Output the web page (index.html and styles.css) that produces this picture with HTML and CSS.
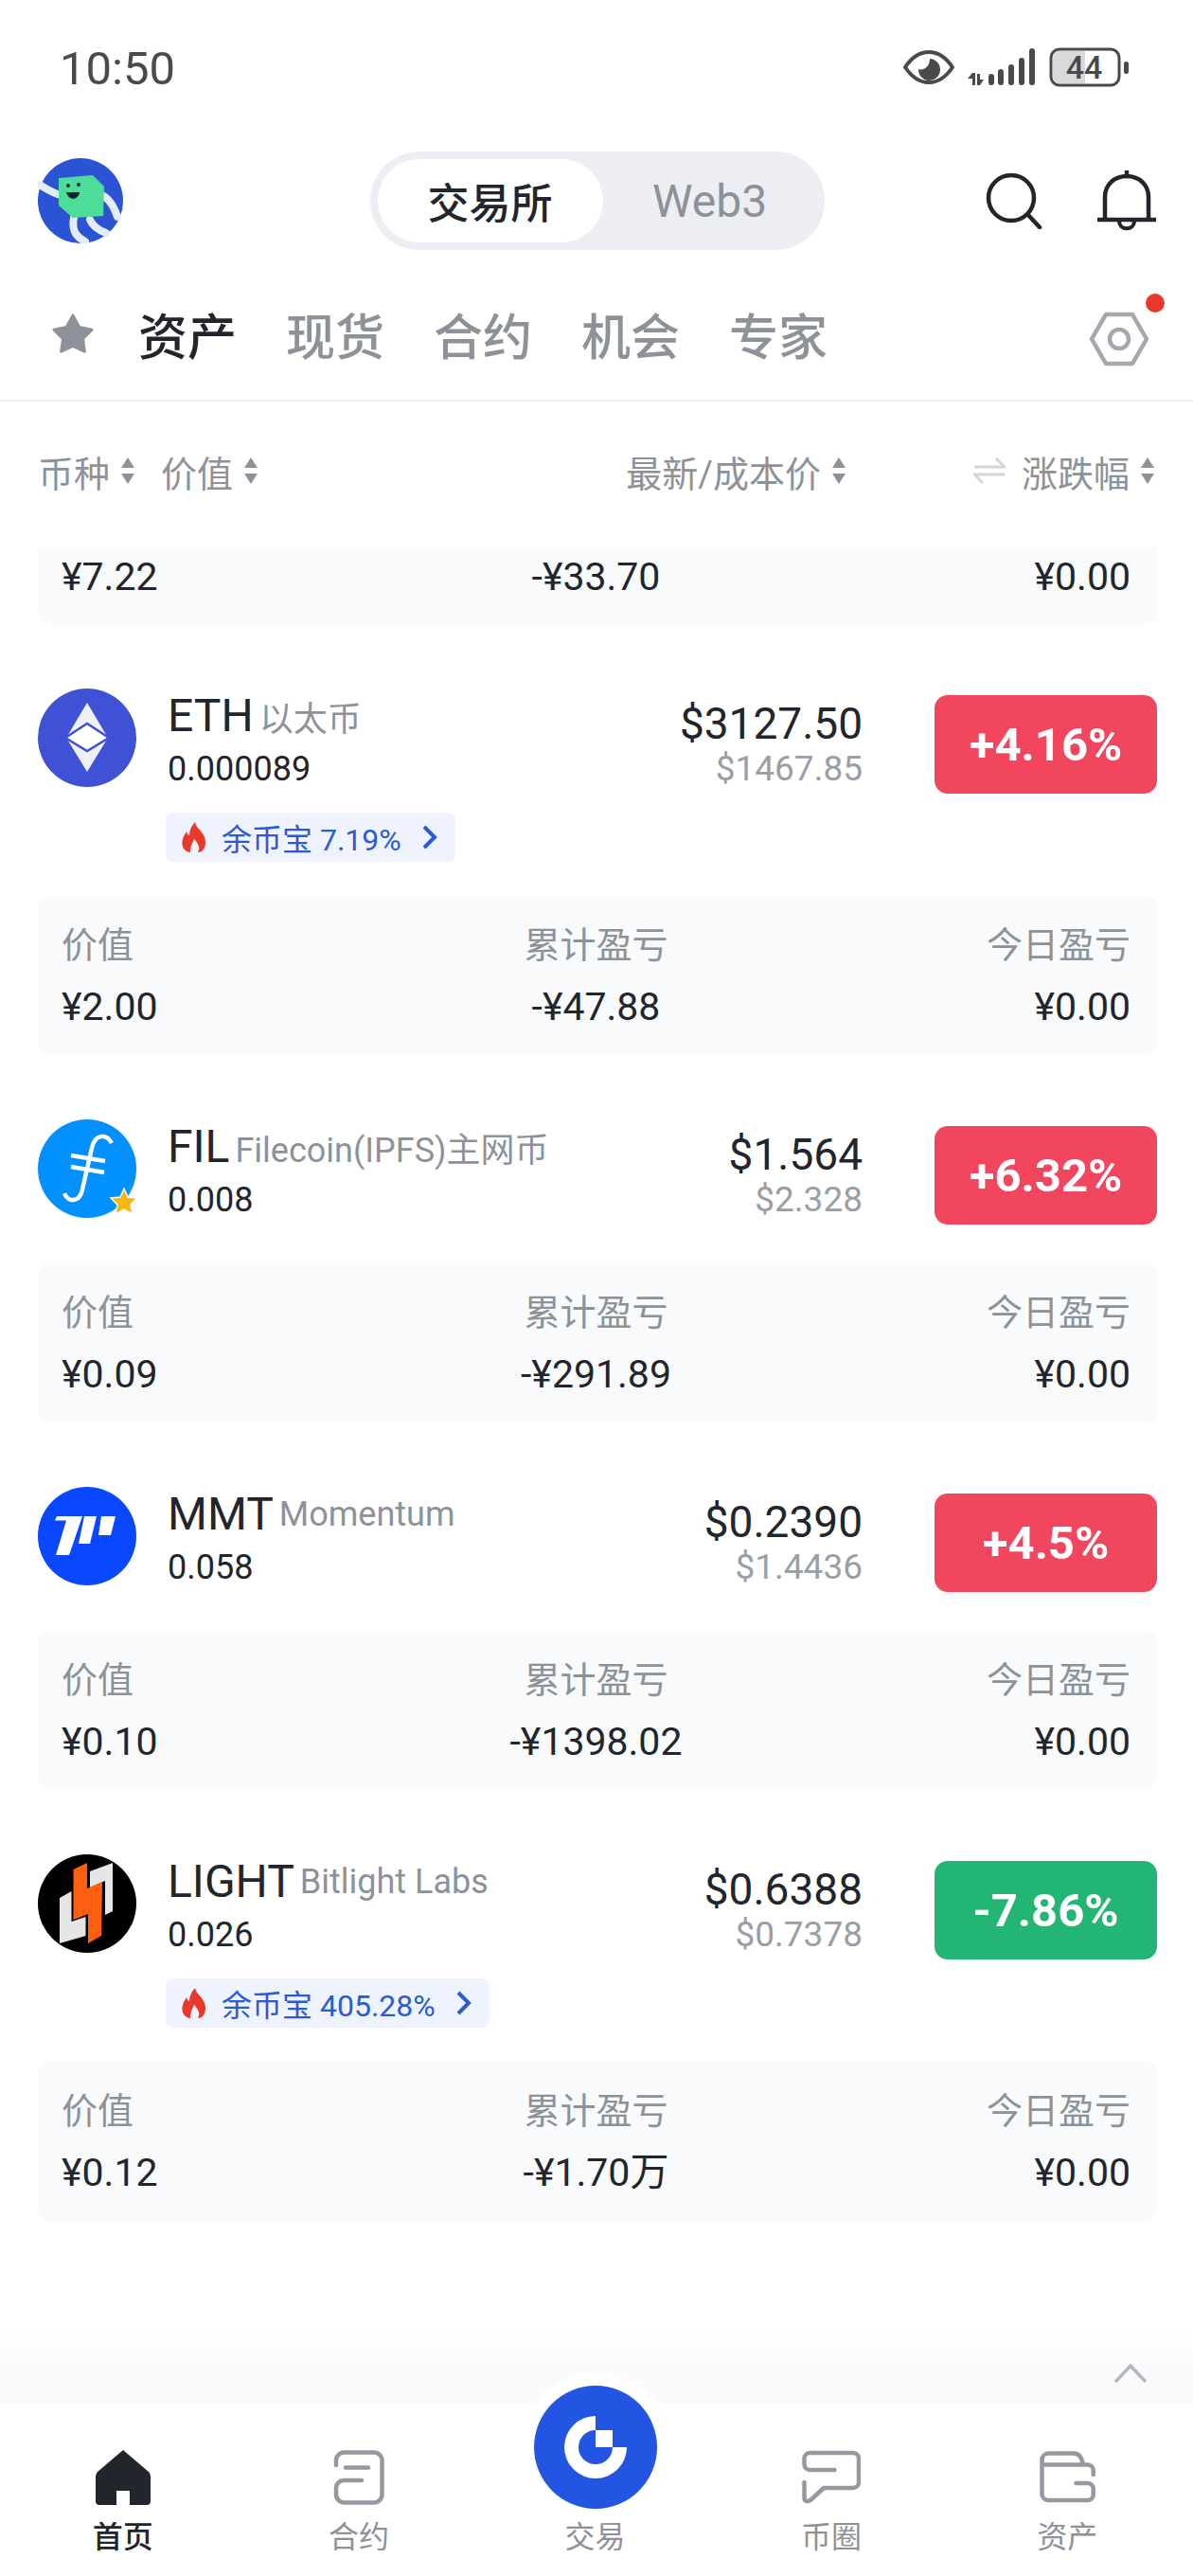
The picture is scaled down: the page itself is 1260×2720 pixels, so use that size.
FILE: index.html
```html
<!DOCTYPE html>
<html lang="zh-CN">
<head>
    <meta charset="UTF-8">
    <meta name="viewport" content="width=device-width, initial-scale=1.0">
    <title>资产</title>
    <link rel="stylesheet" href="styles.css">
</head>
<body>

<svg class="defs" width="0" height="0">
    <symbol id="sort" viewBox="0 0 16 30">
        <path d="M8 1 L15 12 H1 Z M8 29 L15 18 H1 Z" fill="#8d9299"/>
    </symbol>
    <symbol id="fire" viewBox="0 0 26 32">
        <path d="M14 0 C15 6 20 8 23 14 C27 21 25 32 17 32 C20 27 17 22 13 18 C11 23 9 25 9 32 C2 31 -1 25 1 18 C2 14 4 12 5 10 C6 13 7 14 8 14 C8 9 10 4 14 0 Z" fill="#e8392a"/>
    </symbol>
    <symbol id="chev" viewBox="0 0 16 26">
        <path d="M2 2 L13 13 L2 24" fill="none" stroke="#2b5bd0" stroke-width="4"/>
    </symbol>
</svg>

<div class="phone">

    <!-- status bar -->
    <div class="status">
        <span class="time">10:50</span>
        <div class="status-icons">
            <svg width="54" height="36" viewBox="0 0 54 36">
                <path d="M2 18 C10 6 18 2 27 2 C36 2 44 6 52 18 C44 30 36 34 27 34 C18 34 10 30 2 18 Z" fill="none" stroke="#4a4a4a" stroke-width="4"/>
                <path d="M27 7 A11.500 11.500 0 1 1 15 18 C20 20 27 16 27 7 Z" fill="#4a4a4a" transform="translate(1 2)"/>
            </svg>
            <svg width="72" height="42" viewBox="0 0 72 42">
                <path d="M5 27 V40 H8 V27 Z M5 27 L0 33 H5 Z M10 28 V40 H13 L17 34 H13 V28 Z" fill="#4a4a4a"/>
                <rect x="22" y="28" width="6" height="12" rx="3" fill="#4a4a4a"/>
                <rect x="32" y="23" width="6" height="17" rx="3" fill="#4a4a4a"/>
                <rect x="43" y="18" width="6" height="22" rx="3" fill="#4a4a4a"/>
                <rect x="54" y="11" width="6" height="29" rx="3" fill="#4a4a4a"/>
                <rect x="65" y="1" width="6" height="39" rx="3" fill="#4a4a4a"/>
            </svg>
            <svg class="battery" width="84" height="42" viewBox="0 0 84 42">
                <rect x="2" y="2" width="72" height="38" rx="9" fill="#fff" stroke="#4a4a4a" stroke-width="3"/>
                <path d="M4 11 A7 7 0 0 1 11 4 H38 V38 H11 A7 7 0 0 1 4 31 Z" fill="#d9d9d9"/>
                <text x="37" y="33" text-anchor="middle" class="batt-num">44</text>
                <rect x="79" y="15" width="5" height="13" rx="2.500" fill="#4a4a4a"/>
            </svg>
        </div>
    </div>

    <!-- top bar -->
    <div class="topbar">
        <svg class="avatar" width="90" height="90" viewBox="0 0 90 90">
            <circle cx="45" cy="45" r="45" fill="#2a54d4"/>
            <path d="M2 28 C8 32 14 36 24 39 M64 38 C74 40 80 50 84 62 M38 63 C36 74 38 82 50 88 M55 65 C58 72 64 76 72 79" fill="none" stroke="#e4ecfa" stroke-width="8" stroke-linecap="round"/>
            <path d="M22 21 L58 18 L70 30 L69 61 L37 63 L22 50 Z" fill="#4ddc9a"/>
            <circle cx="32" cy="29" r="2" fill="#123"/>
            <circle cx="43" cy="28" r="2" fill="#123"/>
            <path d="M30 36 H44 C43 44 33 46 30 36 Z" fill="#123"/>
        </svg>
        <div class="toggle">
            <span class="toggle-on">交易所</span>
            <span class="toggle-off">Web3</span>
        </div>
        <div class="top-icons">
            <svg width="60" height="60" viewBox="0 0 60 60">
                <circle cx="27" cy="27" r="24" fill="none" stroke="#22252b" stroke-width="4.500"/>
                <path d="M45 45 L57 58" stroke="#22252b" stroke-width="4.500" stroke-linecap="round"/>
            </svg>
            <svg width="62" height="64" viewBox="0 0 62 64">
                <path d="M8 52 V28 C8 15 18 6 31 6 C44 6 54 15 54 28 V52" fill="none" stroke="#22252b" stroke-width="4.500"/>
                <path d="M31 1 V6 M1 52 H61" stroke="#22252b" stroke-width="4.500" stroke-linecap="round"/>
                <path d="M23 53 C23 64 39 64 39 53" fill="none" stroke="#22252b" stroke-width="4"/>
            </svg>
        </div>
    </div>

    <!-- tabs -->
    <div class="tabs">
        <svg class="tab-star" width="44" height="44" viewBox="0 0 46 44">
            <path d="M23 2 L30 15 L44 18 L34 28 L36 42 L23 36 L10 42 L12 28 L2 18 L16 15 Z" fill="#8d9299" stroke="#8d9299" stroke-width="3" stroke-linejoin="round"/>
        </svg>
        <span class="tab tab-on">资产</span>
        <span class="tab">现货</span>
        <span class="tab">合约</span>
        <span class="tab">机会</span>
        <span class="tab">专家</span>
        <div class="tab-set">
            <svg width="64" height="60" viewBox="0 0 64 60">
                <path d="M18 4 H46 L61 30 L46 56 H18 L3 30 Z" fill="none" stroke="#a4a8ae" stroke-width="4.500" stroke-linejoin="round"/>
                <circle cx="32" cy="30" r="10" fill="none" stroke="#a4a8ae" stroke-width="4.500"/>
            </svg>
            <i class="red-dot"></i>
        </div>
    </div>

    <!-- table head -->
    <div class="thead">
        <span class="th">币种<svg width="16" height="30"><use href="#sort"/></svg></span>
        <span class="th">价值<svg width="16" height="30"><use href="#sort"/></svg></span>
        <span class="th th-price">最新/成本价<svg width="16" height="30"><use href="#sort"/></svg></span>
        <span class="th">
            <svg class="swap" width="34" height="34" viewBox="0 0 34 34">
                <path d="M1 13 H33 L24 4 M33 21 H1 L10 30" fill="none" stroke="#d3d6da" stroke-width="3"/>
            </svg>
            涨跌幅<svg width="16" height="30"><use href="#sort"/></svg>
        </span>
    </div>

    <!-- list -->
    <div class="list">
        <div class="panel panel-cut">
            <span class="val">¥7.22</span>
            <span class="val mid">-¥33.70</span>
            <span class="val end">¥0.00</span>
        </div>

        <div class="coin">
            <div class="coin-head">
                <svg class="coin-icon" viewBox="0 0 104 104">
                    <circle cx="52" cy="52" r="52" fill="#3f51d4"/>
                    <path d="M52 15 L74 52 L52 88 L30 52 Z" fill="#eef0fc"/>
                    <path d="M29 52 L52 37 L75 52 L52 66 Z" fill="#fff" stroke="#3f51d4" stroke-width="2.500"/>
                </svg>
                <div class="coin-name">
                    <div class="name-line"><span class="sym">ETH</span><span class="full">以太币</span></div>
                    <div class="qty">0.000089</div>
                </div>
                <div class="coin-price">
                    <div class="price">$3127.50</div>
                    <div class="cost">$1467.85</div>
                </div>
                <div class="chg up">+4.16%</div>
            </div>
            <div class="earn">
                <svg width="26" height="32"><use href="#fire"/></svg>
                <span>余币宝 7.19%</span>
                <svg class="earn-chev" width="16" height="26"><use href="#chev"/></svg>
            </div>
            <div class="panel">
                <span class="lab">价值</span><span class="lab mid">累计盈亏</span><span class="lab end">今日盈亏</span>
                <span class="val">¥2.00</span><span class="val mid">-¥47.88</span><span class="val end">¥0.00</span>
            </div>
        </div>

        <div class="coin">
            <div class="coin-head">
                <div class="icon-wrap">
                    <svg class="coin-icon" viewBox="0 0 104 104">
                        <circle cx="52" cy="52" r="52" fill="#0090ff"/>
                        <path d="M78 25 C72 14 60 16 57 30 L47 74 C44 88 32 88 28 78" fill="none" stroke="#fff" stroke-width="4.500"/>
                        <path d="M35 38 L71 44 M35 50 L70 56" stroke="#fff" stroke-width="4.500"/>
                    </svg>
                    <svg class="fav" width="30" height="30" viewBox="0 0 30 30">
                        <path d="M15 1 L19 10 L29 11 L22 18 L24 28 L15 23 L6 28 L8 18 L1 11 L11 10 Z" fill="#f5b60d" stroke="#fff" stroke-width="1.500"/>
                    </svg>
                </div>
                <div class="coin-name">
                    <div class="name-line"><span class="sym">FIL</span><span class="full">Filecoin(IPFS)主网币</span></div>
                    <div class="qty">0.008</div>
                </div>
                <div class="coin-price">
                    <div class="price">$1.564</div>
                    <div class="cost">$2.328</div>
                </div>
                <div class="chg up">+6.32%</div>
            </div>
            <div class="panel">
                <span class="lab">价值</span><span class="lab mid">累计盈亏</span><span class="lab end">今日盈亏</span>
                <span class="val">¥0.09</span><span class="val mid">-¥291.89</span><span class="val end">¥0.00</span>
            </div>
        </div>

        <div class="coin">
            <div class="coin-head">
                <svg class="coin-icon" viewBox="0 0 104 104">
                    <circle cx="52" cy="52" r="52" fill="#0a48ff"/>
                    <path d="M20 31 H47 L33 72 H19 L30 35.500 H18 Z" fill="#fff"/>
                    <path d="M49 31 H62 L55 60 H43 Z" fill="#fff"/>
                    <path d="M67 31 H82 L77 51 H64 Z" fill="#fff"/>
                </svg>
                <div class="coin-name">
                    <div class="name-line"><span class="sym">MMT</span><span class="full">Momentum</span></div>
                    <div class="qty">0.058</div>
                </div>
                <div class="coin-price">
                    <div class="price">$0.2390</div>
                    <div class="cost">$1.4436</div>
                </div>
                <div class="chg up">+4.5%</div>
            </div>
            <div class="panel">
                <span class="lab">价值</span><span class="lab mid">累计盈亏</span><span class="lab end">今日盈亏</span>
                <span class="val">¥0.10</span><span class="val mid">-¥1398.02</span><span class="val end">¥0.00</span>
            </div>
        </div>

        <div class="coin">
            <div class="coin-head">
                <svg class="coin-icon" viewBox="0 0 104 104">
                    <circle cx="52" cy="52" r="52" fill="#000"/>
                    <path d="M23 46 L35.500 39 V71 L50.500 66 V86 L23 94 Z M55 18 L79 9 V60 L71 64 V28 L55 35 Z" fill="#e6e6e6"/>
                    <path d="M37.500 16 L52 9 V36 L68 29 L67 86 L53 94 V63 L37.500 69 Z" fill="#ff5f0f"/>
                </svg>
                <div class="coin-name">
                    <div class="name-line"><span class="sym">LIGHT</span><span class="full">Bitlight Labs</span></div>
                    <div class="qty">0.026</div>
                </div>
                <div class="coin-price">
                    <div class="price">$0.6388</div>
                    <div class="cost">$0.7378</div>
                </div>
                <div class="chg down">-7.86%</div>
            </div>
            <div class="earn">
                <svg width="26" height="32"><use href="#fire"/></svg>
                <span>余币宝 405.28%</span>
                <svg class="earn-chev" width="16" height="26"><use href="#chev"/></svg>
            </div>
            <div class="panel">
                <span class="lab">价值</span><span class="lab mid">累计盈亏</span><span class="lab end">今日盈亏</span>
                <span class="val">¥0.12</span><span class="val mid">-¥1.70万</span><span class="val end">¥0.00</span>
            </div>
        </div>
    </div>

    <!-- bottom nav -->
    <div class="dock">
        <div class="fade">
            <svg class="fade-chev" width="36" height="22" viewBox="0 0 36 22">
                <path d="M2 20 L18 3 L34 20" fill="none" stroke="#b4b8bd" stroke-width="3.500"/>
            </svg>
        </div>
        <div class="nav">
            <div class="nav-item nav-on">
                <svg width="58" height="58" viewBox="0 0 58 58">
                    <path d="M29 0 L56 23 Q58 25 58 28 V54 A4 4 0 0 1 54 58 H36 V43 H22 V58 H4 A4 4 0 0 1 0 54 V28 Q0 25 2 23 Z" fill="#22252b"/>
                </svg>
                <span>首页</span>
            </div>
            <div class="nav-item">
                <svg width="54" height="58" viewBox="0 0 54 58">
                    <path d="M3 16 V11 A8.500 8.500 0 0 1 11.500 2.500 H43 A8.500 8.500 0 0 1 51.500 11 V47 A8.500 8.500 0 0 1 43 55.500 H11.500 A8.500 8.500 0 0 1 3 47 V40 A8 8 0 0 1 11 32 H30 M13 18.500 H37" fill="none" stroke="#95999f" stroke-width="4.500" stroke-linecap="round"/>
                </svg>
                <span>合约</span>
            </div>
            <div class="nav-item">
                <div class="nav-spacer"></div>
                <span>交易</span>
            </div>
            <div class="nav-item">
                <svg width="62" height="58" viewBox="0 0 62 58">
                    <path d="M34.500 21 H8 A6 6 0 0 1 2.500 15 V9 A6 6 0 0 1 8 3 H54 A6 6 0 0 1 60 9 V34 A6 6 0 0 1 54 40 H23 L9 53 Q2.500 56 2.500 50 V34" fill="none" stroke="#95999f" stroke-width="4.500" stroke-linecap="round" stroke-linejoin="round"/>
                </svg>
                <span>币圈</span>
            </div>
            <div class="nav-item">
                <svg width="59" height="58" viewBox="0 0 59 58">
                    <path d="M2.500 47 V10 A7 7 0 0 1 9.500 3.500 H36 Q44 3.500 46 15.500 H2.500 M46 15.500 H51 A6 6 0 0 1 56.700 21 V26 M56.700 40 V47 A6 6 0 0 1 51 53 H9 A7 7 0 0 1 2.500 47 M56.700 41 A6 6 0 0 0 51 35 H38.500" fill="none" stroke="#95999f" stroke-width="4.500" stroke-linecap="round"/>
                </svg>
                <span>资产</span>
            </div>
        </div>
        <div class="trade-btn">
            <svg width="130" height="130" viewBox="0 0 130 130">
                <circle cx="65" cy="65" r="65" fill="#2256e2"/>
                <path d="M65 32 A33 33 0 1 0 98 65 H83 A18 18 0 1 1 65 47 Z" fill="#fff"/>
                <rect x="65" y="47" width="18" height="18" fill="#fff"/>
            </svg>
        </div>
    </div>

</div>

</body>
</html>
```

FILE: styles.css
```css
* {
    box-sizing: border-box;
}
body {
    margin: 0;
    background-color: #ffffff;
    font-family: Roboto, "Noto Sans CJK SC", sans-serif;
    color: #22252b;
}
.defs {
    display: block;
    height: 0;
}
.phone {
    position: relative;
    width: 1260px;
    height: 2720px;
    overflow: hidden;
    display: flex;
    flex-direction: column;
}

/* status bar */
.status {
    height: 142px;
    flex-shrink: 0;
    display: flex;
    align-items: center;
    justify-content: space-between;
    padding: 0 68px 0 63px;
}
.time {
    font-size: 49px;
    color: #4a4a4a;
    position: relative;
    top: 1px;
}
.status-icons {
    display: flex;
    align-items: center;
    gap: 14px;
}
.batt-num {
    font-family: Roboto, sans-serif;
    font-size: 34px;
    font-weight: 500;
    fill: #4a4a4a;
}

/* top bar */
.topbar {
    height: 140px;
    flex-shrink: 0;
    display: grid;
    grid-template-columns: 1fr auto 1fr;
    align-items: center;
    padding: 0 39px 0 40px;
}
.toggle {
    width: 480px;
    height: 104px;
    padding: 8px;
    border-radius: 52px;
    background-color: #eceef4;
    display: flex;
    align-items: center;
}
.toggle-on {
    width: 238px;
    height: 88px;
    border-radius: 44px;
    background-color: #ffffff;
    display: flex;
    align-items: center;
    justify-content: center;
    font-size: 44px;
    font-weight: 500;
}
.toggle-off {
    flex: 1;
    text-align: center;
    font-size: 48px;
    color: #8d9299;
}
.top-icons {
    display: flex;
    justify-content: flex-end;
    align-items: center;
    gap: 58px;
}

/* tabs */
.tabs {
    height: 142px;
    flex-shrink: 0;
    display: flex;
    align-items: center;
    gap: 52px;
    padding: 0 38px 0 55px;
    border-bottom: 2px solid #eeeff1;
}
.tab-star {
    margin-right: -5px;
}
.tab {
    font-size: 52px;
    font-weight: 500;
    color: #8d9299;
}
.tab-on {
    color: #22252b;
}
.tab-set {
    position: relative;
    margin-left: auto;
    margin-right: 8px;
    margin-top: 12px;
    display: flex;
}
.red-dot {
    position: absolute;
    top: -18px;
    right: -16px;
    width: 20px;
    height: 20px;
    border-radius: 50%;
    background-color: #e8392a;
}

/* table head */
.thead {
    height: 153px;
    flex-shrink: 0;
    display: flex;
    align-items: center;
    padding: 0 40px 7px 40px;
    gap: 27px;
    font-size: 38px;
    color: #8d9299;
}
.th {
    display: flex;
    align-items: center;
    gap: 11px;
}
.th-price {
    margin-left: auto;
    margin-right: 107px;
}
.swap {
    margin-right: 6px;
}

/* coin list */
.list {
    flex: 1;
    padding: 0 38px 0 40px;
}
.panel {
    height: 170px;
    padding: 28px 28px 25px 25px;
    border-radius: 14px;
    background-color: #f8fafc;
    display: grid;
    grid-template-columns: 1fr 1fr 1fr;
    grid-auto-rows: 50px;
    row-gap: 15px;
    align-items: center;
    line-height: 50px;
    font-size: 38px;
}
.panel-cut {
    height: 83px;
    padding-top: 7px;
    padding-bottom: 0;
    border-radius: 0 0 14px 14px;
    margin-bottom: 67px;
}
.lab {
    color: #8d9299;
}
.val {
    font-size: 41px;
    color: #22252b;
}
.mid {
    text-align: center;
}
.end {
    text-align: right;
}

.coin {
    margin-bottom: 67px;
}
.coin-head {
    height: 116px;
    display: flex;
    align-items: flex-start;
}
.coin-icon {
    display: block;
    width: 104px;
    height: 104px;
    flex-shrink: 0;
}
.icon-wrap {
    position: relative;
    flex-shrink: 0;
}
.fav {
    position: absolute;
    right: -2px;
    bottom: 2px;
}
.coin-name {
    margin-left: 33px;
    flex: 1;
}
.name-line {
    height: 56px;
    display: flex;
    align-items: center;
    gap: 6px;
}
.sym {
    font-size: 48px;
    color: #22252b;
}
.full {
    font-size: 36px;
    color: #8d9299;
    position: relative;
    top: 1px;
}
.qty {
    font-size: 36px;
    line-height: 58px;
}
.coin-price {
    text-align: right;
    padding-top: 9px;
}
.price {
    font-size: 46px;
    line-height: 56px;
}
.cost {
    font-size: 37px;
    line-height: 40px;
    color: #9a9ea5;
}
.chg {
    width: 235px;
    height: 104px;
    margin: 7px 0 0 76px;
    border-radius: 14px;
    display: flex;
    align-items: center;
    justify-content: center;
    color: #ffffff;
    font-size: 49px;
    font-weight: 700;
}
.up {
    background-color: #f2465f;
}
.down {
    background-color: #22b574;
}
.earn {
    display: inline-flex;
    vertical-align: top;
    align-items: center;
    height: 52px;
    margin: 15px 0 35px 135px;
    padding: 0 19px 0 17px;
    border-radius: 8px;
    background-color: #eef3fd;
    color: #2b5bd0;
    font-size: 32px;
    gap: 16px;
}
.earn-chev {
    margin-left: 6px;
}
.coin-head + .panel {
    margin-top: 35px;
}

/* bottom nav */
.dock {
    position: absolute;
    left: 0;
    right: 0;
    bottom: 0;
}
.fade {
    position: relative;
    height: 80px;
    background: linear-gradient(#ffffff, #f9fafb 50%);
}
.fade-chev {
    position: absolute;
    right: 48px;
    top: 37px;
}
.nav {
    height: 182px;
    background-color: #ffffff;
    display: grid;
    grid-template-columns: repeat(5, 1fr);
    padding: 0 8px 0 5px;
}
.nav-item {
    display: flex;
    flex-direction: column;
    align-items: center;
    justify-content: flex-end;
    padding-bottom: 24px;
    gap: 17px;
    font-size: 32px;
    line-height: 34px;
    color: #8d9299;
}
.nav-on {
    color: #22252b;
    font-weight: 500;
}
.nav-spacer {
    height: 58px;
}
.trade-btn {
    position: absolute;
    left: 564px;
    top: 61px;
    display: flex;
    border-radius: 50%;
    box-shadow: 0 0 4px 14px #ffffff;
}
```
